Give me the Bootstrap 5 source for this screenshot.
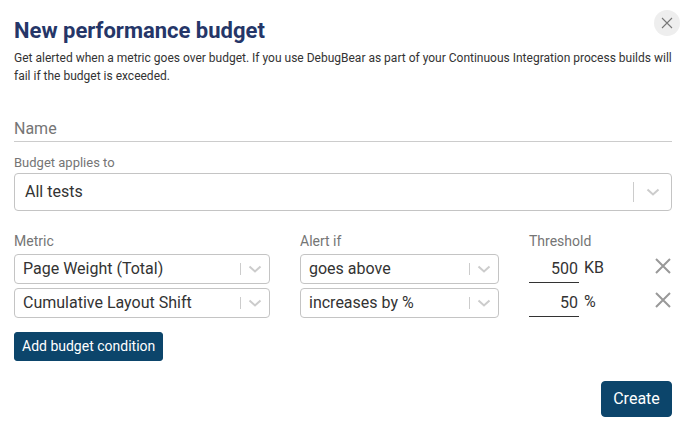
<!DOCTYPE html>
<html lang="en">
<head>
<meta charset="utf-8">
<title>New performance budget</title>
<link href="https://cdn.jsdelivr.net/npm/bootstrap@5.3.0/dist/css/bootstrap.min.css" rel="stylesheet">
<style>
html,body{height:100%;overflow:hidden}
body{background:#fff;font-family:Roboto,"Liberation Sans",sans-serif;color:#333;}
.shell{padding:0 17px 0 14px;height:427px}
.headrow{height:49px;padding-top:18px}
.title{font-size:22px;font-weight:700;color:#253668;margin:0;line-height:26px}
.closer{width:26px;height:26px;border-radius:50%;background:#eee;border:0;padding:0;margin-right:-8px;margin-top:-8px;color:#777}
.intro{font-size:12px;line-height:18px;margin:0;color:#333;height:66px}
.nameinput{display:block;width:100%;border:0;border-bottom:1px solid #ccc;height:27px;font-size:16px;color:#333;outline:0;padding:0;margin-bottom:13px;background:none}
.nameinput::placeholder{color:#757575;opacity:1}
.lbl{font-size:13px;line-height:16px;color:#757575;display:block;margin:0}
.toplabels .lbl{font-size:14px}
.picker{display:flex;align-items:center;background:#fff;border:1px solid #c4c4c4;border-radius:4px;color:#333;font-size:16px}
.picker-lg{height:38px;margin-top:2px;margin-bottom:22px;padding-left:10px}
.picker-sm{height:30px;padding-left:8px}
.pickval{flex:1 1 auto;white-space:nowrap}
.sep{width:1px;background:#ccc;flex:none}
.picker-lg .sep{height:20px}
.picker-sm .sep{height:12px}
.chev{flex:none;display:flex;justify-content:center;align-items:center;color:#ccc}
.picker-lg .chev{width:37px}
.picker-sm .chev{width:28px}
.cols{display:flex}
.col-metric{width:256px;margin-right:30px;flex:none}
.col-alert{width:199px;margin-right:30px;flex:none}
.col-thresh{width:70px;flex:none;white-space:nowrap}
.condrow{margin-bottom:4px}
.toplabels{margin-bottom:5px}
.num{width:50px;height:29px;border:0;border-bottom:1px solid #333;font-size:16px;text-align:right;padding:0 1px 0 0;color:#333;outline:0;background:none;flex:none;align-self:flex-start}
.unit{font-size:16px;margin-left:5px;width:71px;flex:none;padding-bottom:3px}
.remover{width:16px;height:16px;background:none;border:0;padding:0;color:#999;flex:none;display:flex;margin-bottom:7px}
.btn-brand{background:#0c456b;border-color:#0c456b;color:#fff;font-size:14px;padding:0 7px;height:29px;border-radius:3px;line-height:27px}
.btn-brand:hover{background:#0c456b;border-color:#0c456b;color:#fff}
.btn-create{font-size:16px;height:36px;width:71px;padding:0;border-radius:4px;line-height:34px}
.addwrap{margin-top:14px;height:49px}
</style>
</head>
<body>
<div class="shell">
  <div class="headrow d-flex justify-content-between align-items-start">
    <h1 class="title">New performance budget</h1>
    <button class="closer d-flex align-items-center justify-content-center" type="button" aria-label="Close">
      <svg width="12" height="12" viewBox="0 0 12 12"><path d="M1 1l10 10M11 1L1 11" stroke="currentColor" stroke-width="1.1" fill="none"/></svg>
    </button>
  </div>
  <p class="intro">Get alerted when a metric goes over budget. If you use DebugBear as part of your Continuous Integration process builds will fail if the budget is exceeded.</p>
  <input class="nameinput" type="text" placeholder="Name">
  <label class="lbl">Budget applies to</label>
  <div class="picker picker-lg">
    <span class="pickval">All tests</span><span class="sep"></span>
    <span class="chev"><svg width="14" height="8" viewBox="0 0 14 8"><path d="M1.5 1.5L7 6.5l5.5-5" stroke="currentColor" stroke-width="2" fill="none"/></svg></span>
  </div>
  <div class="cols toplabels">
    <span class="lbl col-metric">Metric</span><span class="lbl col-alert">Alert if</span><span class="lbl col-thresh">Threshold</span>
  </div>
  <div class="cols condrow align-items-center">
    <div class="picker picker-sm col-metric"><span class="pickval">Page Weight (Total)</span><span class="sep"></span><span class="chev"><svg width="14" height="8" viewBox="0 0 14 8"><path d="M1.5 1.5L7 6.5l5.5-5" stroke="currentColor" stroke-width="2" fill="none"/></svg></span></div>
    <div class="picker picker-sm col-alert"><span class="pickval">goes above</span><span class="sep"></span><span class="chev"><svg width="14" height="8" viewBox="0 0 14 8"><path d="M1.5 1.5L7 6.5l5.5-5" stroke="currentColor" stroke-width="2" fill="none"/></svg></span></div>
    <input class="num" type="text" value="500">
    <span class="unit">KB</span>
    <button class="remover" type="button" aria-label="Remove"><svg width="16" height="16" viewBox="0 0 16 16"><path d="M1 1l14 14M15 1L1 15" stroke="currentColor" stroke-width="2" fill="none"/></svg></button>
  </div>
  <div class="cols condrow align-items-center">
    <div class="picker picker-sm col-metric"><span class="pickval">Cumulative Layout Shift</span><span class="sep"></span><span class="chev"><svg width="14" height="8" viewBox="0 0 14 8"><path d="M1.5 1.5L7 6.5l5.5-5" stroke="currentColor" stroke-width="2" fill="none"/></svg></span></div>
    <div class="picker picker-sm col-alert"><span class="pickval">increases by %</span><span class="sep"></span><span class="chev"><svg width="14" height="8" viewBox="0 0 14 8"><path d="M1.5 1.5L7 6.5l5.5-5" stroke="currentColor" stroke-width="2" fill="none"/></svg></span></div>
    <input class="num" type="text" value="50">
    <span class="unit">%</span>
    <button class="remover" type="button" aria-label="Remove"><svg width="16" height="16" viewBox="0 0 16 16"><path d="M1 1l14 14M15 1L1 15" stroke="currentColor" stroke-width="2" fill="none"/></svg></button>
  </div>
  <div class="addwrap"><button class="btn btn-brand" type="button">Add budget condition</button></div>
  <div class="d-flex justify-content-end"><button class="btn btn-brand btn-create" type="button">Create</button></div>
</div>
<script src="https://cdn.jsdelivr.net/npm/bootstrap@5.3.0/dist/js/bootstrap.bundle.min.js"></script>
</body>
</html>
